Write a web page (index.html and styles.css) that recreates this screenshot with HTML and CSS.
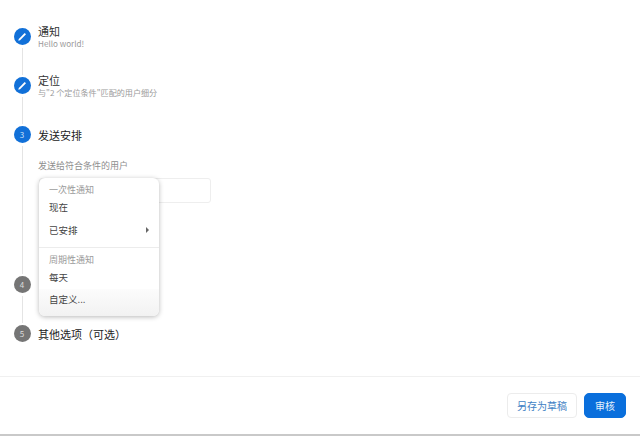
FILE: index.html
```html
<!DOCTYPE html>
<html lang="zh">
<head>
  <meta charset="UTF-8" />
  <title>发送安排</title>
  <link rel="stylesheet" href="styles.css">
</head>
<body>
  <div class="page">
    <div class="steps">
      <div class="step step-short">
        <div class="rail">
          <span class="dot">
            <svg width="11" height="11" viewBox="0 0 10 10"><path d="M1.2 8.8 L1.6 7.2 L7 1.8 L8.2 3 L2.8 8.4 Z" fill="#fff"/></svg>
          </span>
          <span class="line"></span>
        </div>
        <div class="body">
          <div class="title">通知</div>
          <div class="sub">Hello world!</div>
        </div>
      </div>

      <div class="step step-short">
        <div class="rail">
          <span class="dot">
            <svg width="11" height="11" viewBox="0 0 10 10"><path d="M1.2 8.8 L1.6 7.2 L7 1.8 L8.2 3 L2.8 8.4 Z" fill="#fff"/></svg>
          </span>
          <span class="line"></span>
        </div>
        <div class="body">
          <div class="title">定位</div>
          <div class="sub">与"2 个定位条件"匹配的用户细分</div>
        </div>
      </div>

      <div class="step step-open">
        <div class="rail">
          <span class="dot">3</span>
          <span class="line"></span>
        </div>
        <div class="body">
          <div class="title-active">发送安排</div>
          <div class="field-label">发送给符合条件的用户</div>
          <div class="select-box"></div>
          <div class="menu">
            <div class="menu-group">一次性通知</div>
            <div class="menu-item">现在</div>
            <div class="menu-item menu-item-more">已安排<span class="arrow"></span></div>
            <div class="menu-sep"></div>
            <div class="menu-group">周期性通知</div>
            <div class="menu-item">每天</div>
            <div class="menu-item menu-item-hover">自定义...</div>
          </div>
        </div>
      </div>

      <div class="step step-short">
        <div class="rail">
          <span class="dot dot-off">4</span>
          <span class="line"></span>
        </div>
        <div class="body"></div>
      </div>

      <div class="step">
        <div class="rail">
          <span class="dot dot-off">5</span>
        </div>
        <div class="body">
          <div class="title-active">其他选项（可选）</div>
        </div>
      </div>
    </div>

    <div class="footer">
      <button class="btn">另存为草稿</button>
      <button class="btn btn-primary">审核</button>
    </div>
  </div>
</body>
</html>
```

FILE: styles.css
```css
* {
  box-sizing: border-box;
}
html, body {
  margin: 0;
  height: 100%;
  overflow: hidden;
}
body {
  background: #fff;
  font-family: "Noto Sans CJK SC", "Liberation Sans", sans-serif;
  color: #3c4043;
}
.page {
  height: 436px;
  display: flex;
  flex-direction: column;
  border-bottom: 2px solid #c9c9c9;
}
.steps {
  height: 377px;
  padding: 28px 0 0 14px;
  border-bottom: 1px solid #f0f0f0;
}
.step {
  display: flex;
  gap: 8px;
}
.step-short {
  height: 49px;
}
.step-open {
  height: 150px;
}
.rail {
  width: 16px;
  display: flex;
  flex-direction: column;
  align-items: center;
}
.dot {
  width: 17px;
  height: 17px;
  flex: none;
  border-radius: 50%;
  background: #1170d8;
  color: #cfe2f7;
  font-size: 8px;
  line-height: 17px;
  display: flex;
  align-items: center;
  justify-content: center;
}
.dot-off {
  background: #757575;
  color: #ddd;
}
.line {
  width: 1px;
  flex: 1;
  margin: 3px 0 2px;
  background: #e4e4e4;
}
.body {
  position: relative;
  flex: 1;
}
.title {
  margin-top: -4px;
  font-size: 11px;
  line-height: 14px;
  color: #333;
}
.title-active {
  margin-top: 1px;
  font-size: 11px;
  line-height: 16px;
  color: #222;
}
.sub {
  font-size: 8.1px;
  line-height: 11px;
  color: #9a9a9a;
}
.field-label {
  margin-top: 17px;
  font-size: 9px;
  line-height: 12px;
  color: #8e8e8e;
}
.select-box {
  width: 172px;
  height: 25px;
  margin: 6px 0 0 1px;
  border: 1px solid #eeeeee;
  border-radius: 3px;
}
.menu {
  position: absolute;
  top: 52px;
  left: 1px;
  width: 120px;
  height: 138px;
  padding-top: 5px;
  display: flex;
  flex-direction: column;
  background: #fff;
  border-radius: 6px;
  box-shadow: 0 1px 5px rgba(0, 0, 0, 0.28);
  overflow: hidden;
}
.menu-group {
  padding-left: 10px;
  font-size: 9px;
  line-height: 14px;
  color: #9a9a9a;
}
.menu-item {
  height: 22px;
  padding: 0 10px;
  font-size: 9.5px;
  line-height: 20px;
  color: #444;
}
.menu-item-more {
  display: flex;
  align-items: center;
  justify-content: space-between;
}
.menu-item-hover {
  flex: 1;
  background: linear-gradient(#fcfcfc, #f2f2f2);
}
.arrow {
  width: 0;
  height: 0;
  border-left: 3px solid #666;
  border-top: 3px solid transparent;
  border-bottom: 3px solid transparent;
}
.menu-sep {
  height: 1px;
  flex: none;
  margin: 6px 0 5px;
  background: #ececec;
}
.footer {
  flex: 1;
  display: flex;
  justify-content: flex-end;
  align-items: flex-start;
  gap: 7px;
  padding: 16px 14px 0 0;
}
.btn {
  height: 25px;
  padding: 0 9px;
  font-family: inherit;
  font-size: 10px;
  color: #3f7fc4;
  background: #fff;
  border: 1px solid #ececec;
  border-radius: 4px;
}
.btn-primary {
  padding: 0 10px;
  color: #e3effb;
  background: #0a6fdc;
  border-color: #0a6fdc;
  border-radius: 5px;
}
```
